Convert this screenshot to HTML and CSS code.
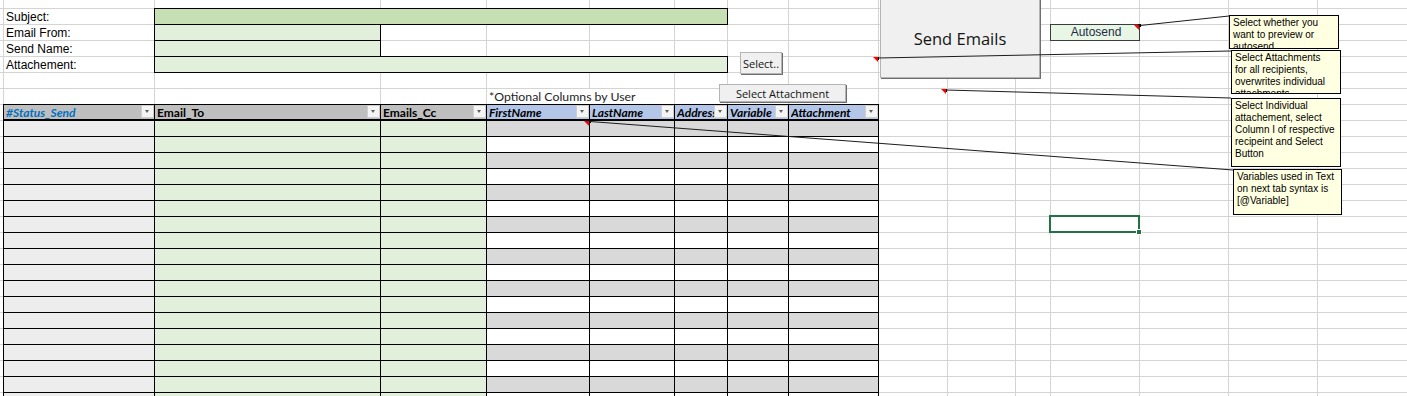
FILE: index.html
```html
<!DOCTYPE html>
<html>
<head>
<meta charset="utf-8">
<title>Email Sender</title>
<link rel="stylesheet" href="styles.css">
</head>
<body>
<div class="sheet">
  <div class="label l-subject">Subject:</div>
  <div class="label l-from">Email From:</div>
  <div class="label l-name">Send Name:</div>
  <div class="label l-attach">Attachement:</div>

  <div class="field wide dark f-subject"></div>
  <div class="field f-from"></div>
  <div class="field f-name"></div>
  <div class="field wide f-attach"></div>

  <div class="optional">*Optional Columns by User</div>
  <div class="autosend">Autosend</div>
  <div class="active"><span class="handle"></span></div>

  <div class="table">
    <div class="trow head">
      <div class="th status"><span class="t">#Status_Send</span><span class="dd"></span></div>
      <div class="th"><span class="t">Email_To</span><span class="dd"></span></div>
      <div class="th"><span class="t">Emails_Cc</span><span class="dd"></span></div>
      <div class="th blue"><span class="t">FirstName</span><span class="dd"></span></div>
      <div class="th blue"><span class="t">LastName</span><span class="dd"></span></div>
      <div class="th blue"><span class="t">Address</span><span class="dd"></span></div>
      <div class="th blue"><span class="t">Variable</span><span class="dd"></span></div>
      <div class="th blue last"><span class="t">Attachment</span><span class="dd"></span></div>
    </div>
    <div class="trow"><div class="td a"></div><div class="td g"></div><div class="td g"></div><div class="td o"></div><div class="td o"></div><div class="td o"></div><div class="td o"></div><div class="td o last"></div></div>
    <div class="trow"><div class="td a"></div><div class="td g"></div><div class="td g"></div><div class="td o"></div><div class="td o"></div><div class="td o"></div><div class="td o"></div><div class="td o last"></div></div>
    <div class="trow"><div class="td a"></div><div class="td g"></div><div class="td g"></div><div class="td o"></div><div class="td o"></div><div class="td o"></div><div class="td o"></div><div class="td o last"></div></div>
    <div class="trow"><div class="td a"></div><div class="td g"></div><div class="td g"></div><div class="td o"></div><div class="td o"></div><div class="td o"></div><div class="td o"></div><div class="td o last"></div></div>
    <div class="trow"><div class="td a"></div><div class="td g"></div><div class="td g"></div><div class="td o"></div><div class="td o"></div><div class="td o"></div><div class="td o"></div><div class="td o last"></div></div>
    <div class="trow"><div class="td a"></div><div class="td g"></div><div class="td g"></div><div class="td o"></div><div class="td o"></div><div class="td o"></div><div class="td o"></div><div class="td o last"></div></div>
    <div class="trow"><div class="td a"></div><div class="td g"></div><div class="td g"></div><div class="td o"></div><div class="td o"></div><div class="td o"></div><div class="td o"></div><div class="td o last"></div></div>
    <div class="trow"><div class="td a"></div><div class="td g"></div><div class="td g"></div><div class="td o"></div><div class="td o"></div><div class="td o"></div><div class="td o"></div><div class="td o last"></div></div>
    <div class="trow"><div class="td a"></div><div class="td g"></div><div class="td g"></div><div class="td o"></div><div class="td o"></div><div class="td o"></div><div class="td o"></div><div class="td o last"></div></div>
    <div class="trow"><div class="td a"></div><div class="td g"></div><div class="td g"></div><div class="td o"></div><div class="td o"></div><div class="td o"></div><div class="td o"></div><div class="td o last"></div></div>
    <div class="trow"><div class="td a"></div><div class="td g"></div><div class="td g"></div><div class="td o"></div><div class="td o"></div><div class="td o"></div><div class="td o"></div><div class="td o last"></div></div>
    <div class="trow"><div class="td a"></div><div class="td g"></div><div class="td g"></div><div class="td o"></div><div class="td o"></div><div class="td o"></div><div class="td o"></div><div class="td o last"></div></div>
    <div class="trow"><div class="td a"></div><div class="td g"></div><div class="td g"></div><div class="td o"></div><div class="td o"></div><div class="td o"></div><div class="td o"></div><div class="td o last"></div></div>
    <div class="trow"><div class="td a"></div><div class="td g"></div><div class="td g"></div><div class="td o"></div><div class="td o"></div><div class="td o"></div><div class="td o"></div><div class="td o last"></div></div>
    <div class="trow"><div class="td a"></div><div class="td g"></div><div class="td g"></div><div class="td o"></div><div class="td o"></div><div class="td o"></div><div class="td o"></div><div class="td o last"></div></div>
    <div class="trow"><div class="td a"></div><div class="td g"></div><div class="td g"></div><div class="td o"></div><div class="td o"></div><div class="td o"></div><div class="td o"></div><div class="td o last"></div></div>
    <div class="trow"><div class="td a"></div><div class="td g"></div><div class="td g"></div><div class="td o"></div><div class="td o"></div><div class="td o"></div><div class="td o"></div><div class="td o last"></div></div>
    <div class="trow"><div class="td a"></div><div class="td g"></div><div class="td g"></div><div class="td o"></div><div class="td o"></div><div class="td o"></div><div class="td o"></div><div class="td o last"></div></div>
  </div>

  <button class="xbtn send">Send Emails</button>
  <button class="xbtn pick">Select..</button>
  <button class="xbtn pick-att">Select Attachment</button>

  <svg class="links" width="1407" height="396" viewBox="0 0 1407 396">
    <g stroke="#1c1c1c" stroke-width="1" fill="none">
      <line x1="1229" y1="16" x2="1140" y2="25.5"/>
      <line x1="1231" y1="51" x2="878" y2="58"/>
      <line x1="1231" y1="98" x2="946" y2="90"/>
      <line x1="1233" y1="170" x2="590" y2="121.5"/>
    </g>
    <g fill="#000">
      <rect x="1138" y="24" width="3" height="3"/>
      <rect x="876" y="57" width="3" height="3"/>
      <rect x="944" y="89" width="3" height="3"/>
      <rect x="588" y="120" width="3" height="3"/>
    </g>
  </svg>

  <span class="flag fl1"></span>
  <span class="flag fl2"></span>
  <span class="flag fl3"></span>
  <span class="flag fl4"></span>

  <div class="note n1">Select whether you<br>want to preview or<br>autosend</div>
  <div class="note n2">Select Attachments<br>for all recipients,<br>overwrites individual<br>attachments</div>
  <div class="note n3">Select Individual<br>attachement, select<br>Column I of respective<br>recipeint and Select<br>Button</div>
  <div class="note n4">Variables used in Text<br>on next tab syntax is<br>[@Variable]</div>
</div>
</body>
</html>
```

FILE: styles.css
```css
* { box-sizing: border-box; }

html, body {
  margin: 0;
  padding: 0;
  background: #fff;
}

body {
  width: 1407px;
  height: 396px;
  overflow: hidden;
  font-family: "Liberation Sans", Arial, sans-serif;
  color: #000;
}

.sheet {
  position: relative;
  width: 1407px;
  height: 396px;
  overflow: hidden;
  display: grid;
  grid-template-columns: 3px 151px 226px 106px 103px 85px 53px 61px 90px 69px 68px 35px 89px 89px 89px 90px;
  grid-template-rows: 8px repeat(25, 16px);
  background:
    linear-gradient(#d4d4d4, #d4d4d4) 3px 0 / 1px 100% no-repeat,
    linear-gradient(#d4d4d4, #d4d4d4) 154px 0 / 1px 100% no-repeat,
    linear-gradient(#d4d4d4, #d4d4d4) 380px 0 / 1px 100% no-repeat,
    linear-gradient(#d4d4d4, #d4d4d4) 486px 0 / 1px 100% no-repeat,
    linear-gradient(#d4d4d4, #d4d4d4) 589px 0 / 1px 100% no-repeat,
    linear-gradient(#d4d4d4, #d4d4d4) 674px 0 / 1px 100% no-repeat,
    linear-gradient(#d4d4d4, #d4d4d4) 727px 0 / 1px 100% no-repeat,
    linear-gradient(#d4d4d4, #d4d4d4) 788px 0 / 1px 100% no-repeat,
    linear-gradient(#d4d4d4, #d4d4d4) 878px 0 / 1px 100% no-repeat,
    linear-gradient(#d4d4d4, #d4d4d4) 947px 0 / 1px 100% no-repeat,
    linear-gradient(#d4d4d4, #d4d4d4) 1015px 0 / 1px 100% no-repeat,
    linear-gradient(#d4d4d4, #d4d4d4) 1050px 0 / 1px 100% no-repeat,
    linear-gradient(#d4d4d4, #d4d4d4) 1139px 0 / 1px 100% no-repeat,
    linear-gradient(#d4d4d4, #d4d4d4) 1228px 0 / 1px 100% no-repeat,
    linear-gradient(#d4d4d4, #d4d4d4) 1317px 0 / 1px 100% no-repeat,
    linear-gradient(to bottom, #d4d4d4 1px, transparent 1px) 0 8px / 100% 16px,
    #fff;
}

/* ---------- form labels & fields ---------- */
.label {
  grid-column: 2;
  font-size: 12px;
  line-height: 16px;
  padding: 1px 0 0 3px;
  white-space: nowrap;
}
.l-subject { grid-row: 2; }
.l-from    { grid-row: 3; }
.l-name    { grid-row: 4; }
.l-attach  { grid-row: 5; }

.field {
  grid-column: 3;
  border: 1px solid #000;
  margin: 0 -1px -1px 0;
  background: #e2efda;
}
.field.wide { grid-column: 3 / 8; }
.field.dark { background: #c6e0b4; }
.f-subject { grid-row: 2; }
.f-from    { grid-row: 3; }
.f-name    { grid-row: 4; }
.f-attach  { grid-row: 5; }

.optional {
  grid-column: 5 / 7;
  grid-row: 7;
  margin: 1px 0 0 1px;
  background: #fff;
  padding-left: 2px;
  font-family: Lato, "Liberation Sans", sans-serif;
  font-size: 12.3px;
  line-height: 15px;
  color: #1e1e1e;
  white-space: nowrap;
}

.autosend {
  grid-column: 13;
  grid-row: 3;
  margin: 0 -1px -1px 0;
  border: 1px solid #3c3c3c;
  background: #e8f6e5;
  color: #1f2b46;
  font-size: 12px;
  line-height: 15px;
  text-align: center;
  padding-left: 2px;
}

.active {
  grid-column: 13;
  grid-row: 15;
  margin: -1px;
  border: 2px solid #217346;
  position: relative;
}
.handle {
  position: absolute;
  right: -4px;
  bottom: -4px;
  width: 6px;
  height: 6px;
  background: #217346;
  border: 1px solid #fff;
}

/* ---------- table ---------- */
.table {
  grid-column: 2 / 10;
  grid-row: 8 / span 19;
  display: flex;
  flex-direction: column;
}
.trow {
  flex: none;
  height: 16px;
  display: grid;
  grid-template-columns: 151px 226px 106px 103px 85px 53px 61px 90px;
}
.td {
  border-left: 1px solid #000;
  border-top: 1px solid #000;
  background: #fff;
}
.td.a { background: #ededed; }
.td.g { background: #e2efda; }
.trow:nth-child(even) .td.o { background: #d9d9d9; }
.last {
  border-right: 1px solid #000;
  margin-right: -1px;
}

.th {
  display: flex;
  align-items: flex-start;
  border-left: 1px solid #000;
  border-top: 1px solid #000;
  border-bottom: 1px solid #000;
  background: #bfbfbf;
  padding-left: 2px;
  font-family: Lato, "Liberation Sans", sans-serif;
  font-weight: bold;
  font-size: 12px;
  line-height: 14px;
  white-space: nowrap;
  overflow: hidden;
}
.th .t {
  flex: 1;
  min-width: 0;
  overflow: hidden;
  padding-top: 1px;
}
.th.status { color: #0070c0; font-style: italic; }
.th.blue { background: #b4c6e7; font-style: italic; }

.dd {
  flex: none;
  position: relative;
  width: 13px;
  height: 13px;
  background: #f4f4f4;
  border: 1px solid #cfcfcf;
}
.dd::after {
  content: "";
  position: absolute;
  left: 3px;
  top: 4px;
  border-top: 3px solid #5f5f5f;
  border-left: 2.5px solid transparent;
  border-right: 2.5px solid transparent;
}

/* ---------- floating controls ---------- */
.xbtn {
  position: absolute;
  appearance: none;
  -webkit-appearance: none;
  margin: 0;
  padding: 0;
  background: #f0f0f0;
  border: 1px solid #b4b4b4;
  box-shadow: 1px 1px 0 #6e6e6e;
  font-family: "Open Sans", "Noto Sans", sans-serif;
  color: #141414;
  display: flex;
  align-items: center;
  justify-content: center;
  white-space: nowrap;
}
.send {
  left: 880px;
  top: -4px;
  width: 160px;
  height: 82px;
  font-size: 16.5px;
  padding-top: 3px;
}
.pick {
  left: 740px;
  top: 52px;
  width: 42px;
  height: 22px;
  font-size: 11px;
}
.pick-att {
  left: 719px;
  top: 84px;
  width: 127px;
  height: 18px;
  font-size: 11px;
}

.links {
  position: absolute;
  left: 0;
  top: 0;
  pointer-events: none;
}

.flag {
  position: absolute;
  width: 0;
  height: 0;
  border-top: 5px solid #ff0000;
  border-left: 5px solid transparent;
}
.fl1 { left: 1134px; top: 25px; }
.fl2 { left: 873px; top: 57px; }
.fl3 { left: 941px; top: 89px; }
.fl4 { left: 584px; top: 121px; }

.note {
  position: absolute;
  background: #ffffe1;
  border: 1px solid #000;
  padding: 1px 3px;
  font-family: "Liberation Sans", Arial, sans-serif;
  font-size: 10px;
  line-height: 12px;
  color: #000;
  white-space: nowrap;
  overflow: hidden;
}
.n1 { left: 1229px; top: 15px; width: 110px; height: 34px; }
.n2 { left: 1231px; top: 50px; width: 110px; height: 44px; }
.n3 { left: 1231px; top: 98px; width: 110px; height: 69px; }
.n4 { left: 1233px; top: 169px; width: 109px; height: 46px; }
```
